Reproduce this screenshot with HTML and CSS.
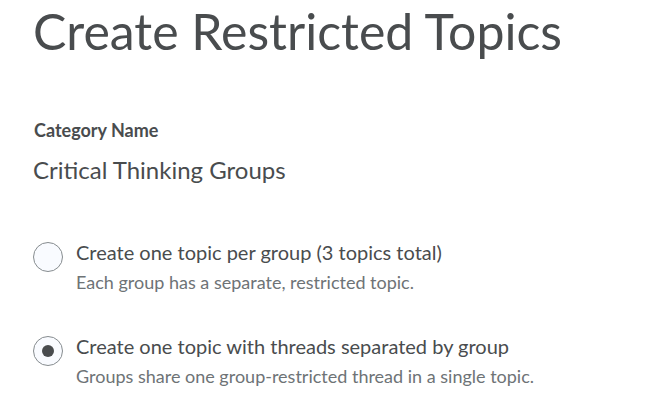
FILE: index.html
```html
<!DOCTYPE html>
<html lang="en">
<head>
<meta charset="utf-8">
<title>Create Restricted Topics</title>
<link rel="stylesheet" href="styles.css">
</head>
<body>
<main class="page">
  <h1 class="title">Create Restricted Topics</h1>
  <section class="field">
    <div class="field-label">Category Name</div>
    <div class="field-value">Critical Thinking Groups</div>
  </section>
  <div class="options">
    <label class="option">
      <span class="radio"></span>
      <span class="option-text">
        <span class="option-label">Create one topic per group (3 topics total)</span>
        <span class="option-desc">Each group has a separate, restricted topic.</span>
      </span>
    </label>
    <label class="option">
      <span class="radio checked"></span>
      <span class="option-text">
        <span class="option-label">Create one topic with threads separated by group</span>
        <span class="option-desc">Groups share one group-restricted thread in a single topic.</span>
      </span>
    </label>
  </div>
</main>
</body>
</html>
```
FILE: styles.css
```css
html, body {
  margin: 0;
  padding: 0;
  background: #ffffff;
}
body {
  font-family: Lato, "Noto Sans", sans-serif;
  color: #494c4e;
}
.page {
  padding: 1px 0 0 33px;
}
.title {
  margin: 0;
  font-size: 50px;
  font-weight: 400;
  line-height: 60px;
}
.field {
  margin-top: 58px;
}
.field-label {
  font-size: 18px;
  font-weight: 700;
  line-height: 22px;
  padding-left: 1px;
}
.field-value {
  margin-top: 14px;
  font-size: 24px;
  line-height: 29px;
}
.options {
  margin-top: 56px;
  display: flex;
  flex-direction: column;
  gap: 41px;
}
.option {
  display: flex;
  align-items: flex-start;
  gap: 13px;
}
.radio {
  flex: none;
  box-sizing: border-box;
  width: 30px;
  height: 30px;
  margin-top: 2px;
  border: 1px solid #868c8f;
  border-radius: 50%;
  background: #f9fbff;
  display: flex;
  align-items: center;
  justify-content: center;
}
.radio.checked::after {
  content: "";
  width: 12px;
  height: 12px;
  border-radius: 50%;
  background: #494c4e;
}
.option-text {
  display: flex;
  flex-direction: column;
  gap: 7px;
}
.option-label {
  font-size: 20px;
  line-height: 24px;
  color: #494c4e;
}
.option-desc {
  font-size: 18px;
  line-height: 22px;
  color: #6e7376;
}
```
